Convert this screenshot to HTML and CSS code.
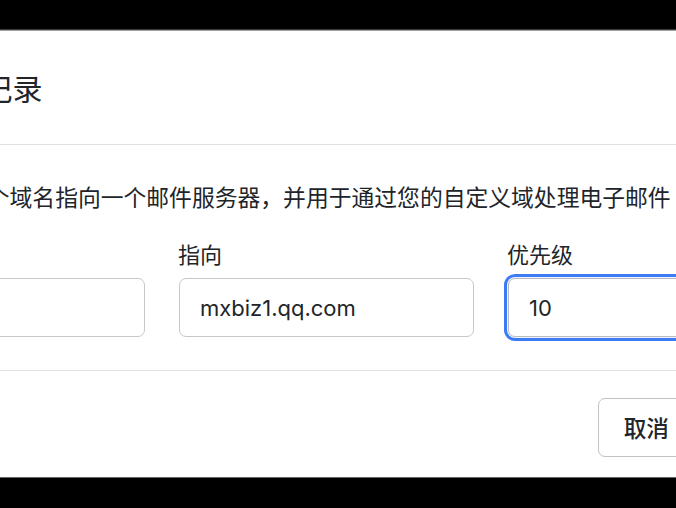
FILE: index.html
```html
<!DOCTYPE html>
<html lang="zh-CN">
<head>
    <meta charset="UTF-8">
    <meta name="viewport" content="width=device-width, initial-scale=1.0">
    <title>添加 MX 记录</title>
    <link rel="stylesheet" href="styles.css">
</head>
<body>
    <div class="bar bar-top"></div>
    <div class="edge edge-top"></div>
    <div class="window">
        <div class="modal">
            <div class="modal-header">
                <h5 class="modal-title">添加 MX 记录</h5>
            </div>
            <div class="modal-body">
                <p class="hint">MX 记录将一个域名指向一个邮件服务器，并用于通过您的自定义域处理电子邮件</p>
                <div class="fields">
                    <div class="field">
                        <label for="host">主机记录</label>
                        <input class="form-control" id="host" type="text" value="@">
                    </div>
                    <div class="field">
                        <label for="target">指向</label>
                        <input class="form-control" id="target" type="text" value="mxbiz1.qq.com">
                    </div>
                    <div class="field">
                        <label for="priority">优先级</label>
                        <input class="form-control focused" id="priority" type="text" value="10">
                    </div>
                </div>
            </div>
            <div class="modal-footer">
                <button class="btn">取消</button>
                <button class="btn btn-primary">保存</button>
            </div>
        </div>
    </div>
    <div class="edge edge-bottom"></div>
    <div class="bar"></div>
</body>
</html>
```

FILE: styles.css
```css
body {
    margin: 0;
    height: 100vh;
    overflow: hidden;
    background-color: #000;
    display: flex;
    flex-direction: column;
    font-family: Inter, "Noto Sans CJK SC", sans-serif;
    color: #212529;
}

.bar {
    flex: 1;
    background-color: #000;
}

.bar-top {
    flex: 0 0 29px;
}

.edge-top {
    height: 2px;
    background: linear-gradient(#3c3c3c 50%, #a0a0a0 50%);
}

.edge-bottom {
    height: 1px;
    background-color: #666;
}

.window {
    flex: 0 0 446px;
    overflow: hidden;
    background-color: #fff;
}

.modal {
    width: 995px;
    margin-left: -172px;
}

.modal-header {
    padding: 37px 21px 34px;
    border-bottom: 1px solid #dee2e6;
}

.modal-title {
    margin: 0;
    font-size: 30px;
    font-weight: 400;
    line-height: 42px;
    white-space: nowrap;
    text-indent: 9px;
}

.modal-body {
    padding: 36px 21px 33px;
}

.hint {
    margin: 0 0 25px;
    font-size: 22.8px;
    line-height: 33px;
    white-space: nowrap;
    text-indent: 4px;
}

.fields {
    display: grid;
    grid-template-columns: repeat(3, 295px);
    column-gap: 34px;
    margin-left: 1px;
}

.field label {
    display: block;
    margin-bottom: 6px;
    font-size: 22px;
    line-height: 33px;
    text-indent: -1px;
}

.form-control {
    box-sizing: border-box;
    width: 100%;
    height: 59px;
    padding: 0 20px;
    font-family: inherit;
    font-size: 22px;
    color: #212529;
    background-color: #fff;
    border: 1px solid #c4c7cb;
    border-radius: 7px;
    outline: none;
}

.form-control.focused {
    border-color: #b9bcc0;
    box-shadow: 0 0 0 1px #eef3ff, 0 0 0 4px #3b7cf6;
}

.modal-footer {
    display: flex;
    justify-content: flex-end;
    gap: 10px;
    padding: 27px 21px 21px;
    border-top: 1px solid #dee2e6;
}

.btn {
    height: 59px;
    padding: 0 25px;
    font-family: inherit;
    font-size: 22.6px;
    font-weight: 500;
    color: #212529;
    background-color: #fff;
    border: 1px solid #bfc3c8;
    border-radius: 7px;
}

.btn-primary {
    color: #fff;
    background-color: #0d6efd;
    border-color: #0d6efd;
}
```
